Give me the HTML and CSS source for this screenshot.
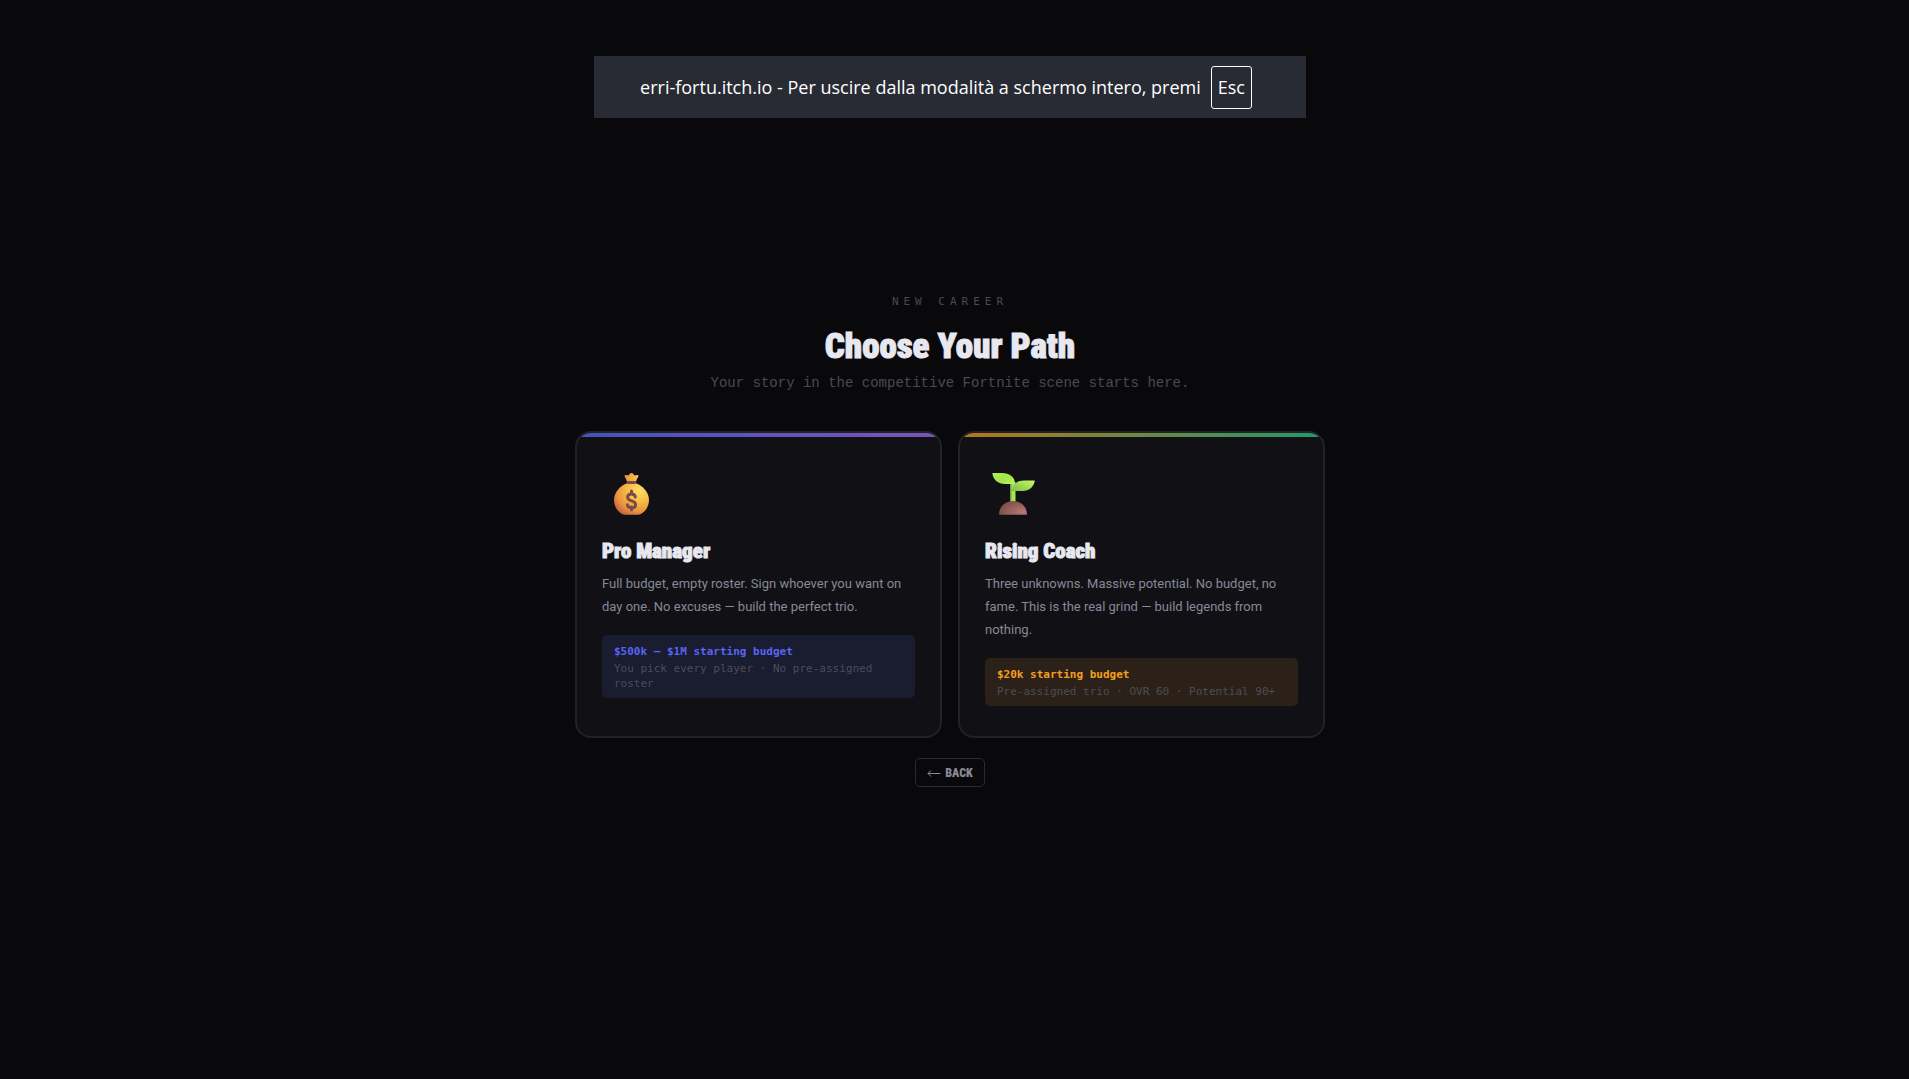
FILE: index.html
```html
<!doctype html>
<html lang="en">

<head>
    <meta charset="utf-8">
    <meta name="viewport" content="width=device-width, initial-scale=1">
    <title>New Career</title>
    <link rel="stylesheet" href="styles.css">
</head>

<body>
    <div class="fs-notice" lang="it">
        <span>erri-fortu.itch.io - Per uscire dalla modalità a schermo intero, premi</span>
        <kbd>Esc</kbd>
    </div>

    <main class="screen">
        <header class="intro">
            <p class="eyebrow">NEW CAREER</p>
            <h1>Choose Your Path</h1>
            <p class="tagline">Your story in the competitive Fortnite scene starts here.</p>
        </header>

        <div class="paths">
            <a class="card pro" href="#pro">
                <svg class="icon" viewBox="0 0 60 44" aria-hidden="true">
                    <defs>
                        <radialGradient id="gold" cx=".72" cy=".25" r=".85">
                            <stop offset="0" stop-color="#ffe067" />
                            <stop offset=".45" stop-color="#f6b840" />
                            <stop offset=".75" stop-color="#ea9440" />
                            <stop offset="1" stop-color="#c9653f" />
                        </radialGradient>
                        <linearGradient id="neck" x1="0" y1="0" x2="1" y2="0">
                            <stop offset="0" stop-color="#ef8f3c" />
                            <stop offset="1" stop-color="#fcc850" />
                        </linearGradient>
                    </defs>
                    <path fill="url(#neck)" d="M25 10 24.500 8l-1.800-3.400c-.4-.9.300-1.700 1.200-1.500l2.500.5 1.700-2c.8-.9 2-.9 2.800 0l1.700 2 2.500-.5c.9-.2 1.600.6 1.200 1.500L34.500 8 34 10z" />
                    <path fill="url(#gold)" d="M25.500 11h8C41 13.500 47 20.500 47 28c0 5.800-2.800 11-8 14a7 7 0 0 1-3 .7H23a7 7 0 0 1-3-.7c-5.200-3-8-8.200-8-14 0-7.500 6-14.500 13.500-17z" />
                    <rect x="25" y="9" width="9" height="3" rx="1" fill="#7d4a4b" />
                    <path fill="none" stroke="#7d4a4b" stroke-width="3" stroke-linecap="round" d="M29.500 19v3M29.500 35v3M33.300 25c-.4-2-1.800-3-3.800-3-2.300 0-3.900 1.300-3.900 3.200 0 4.700 8 2.600 8 7.200 0 2.100-1.700 3.400-4.100 3.400-2.300 0-3.800-1.200-4.100-3.100" />
                </svg>
                <h2>Pro Manager</h2>
                <p class="desc">Full budget, empty roster. Sign whoever you want on day one. No excuses — build the perfect trio.</p>
                <div class="perk">
                    <strong>$500k – $1M starting budget</strong>
                    <small>You pick every player · No pre-assigned roster</small>
                </div>
            </a>

            <a class="card coach" href="#coach">
                <svg class="icon" viewBox="0 0 60 44" aria-hidden="true">
                    <defs>
                        <linearGradient id="leafLeft" x1="0" y1="0" x2="1" y2="1">
                            <stop offset="0" stop-color="#b2f05d" />
                            <stop offset=".5" stop-color="#a4e34a" />
                            <stop offset="1" stop-color="#bdf55c" />
                        </linearGradient>
                        <linearGradient id="leafRight" x1="0" y1="1" x2="1" y2="0">
                            <stop offset="0" stop-color="#7dbd52" />
                            <stop offset=".5" stop-color="#a1dc4e" />
                            <stop offset="1" stop-color="#c9fa79" />
                        </linearGradient>
                        <radialGradient id="soil" cx=".85" cy=".8" r=".9">
                            <stop offset="0" stop-color="#b77975" />
                            <stop offset="1" stop-color="#7c4e48" />
                        </radialGradient>
                    </defs>
                    <path fill="#a9e653" d="M25.500 10h5v21h-5z" />
                    <path fill="#86c255" d="M25.500 12H27v19h-1.500z" />
                    <path fill="url(#leafLeft)" d="M8 1h9c8 0 13 4 13 11H20C13 12 8.500 8 7.400 1.800 7.300 1.300 7.500 1 8 1z" />
                    <path fill="url(#leafRight)" d="M27 19c0-6.500 5-10.500 12-10.500h10c.6 0 .9.500.7 1C48 15.500 44 19 38 19z" />
                    <path fill="url(#soil)" d="M14 42.700C14 35 20 29 28 29s14 6 14 13.700z" />
                </svg>
                <h2>Rising Coach</h2>
                <p class="desc">Three unknowns. Massive potential. No budget, no fame. This is the real grind — build legends from nothing.</p>
                <div class="perk">
                    <strong>$20k starting budget</strong>
                    <small>Pre-assigned trio · OVR 60 · Potential 90+</small>
                </div>
            </a>
        </div>

        <button class="back" type="button">
            <svg class="arrow" viewBox="0 0 14 8" aria-hidden="true">
                <path d="M13.500 4.500H1M4 1.500 1 4.500 4 7.500" />
            </svg>
            BACK
        </button>
    </main>
</body>

</html>
```
FILE: styles.css
```css
* {
    box-sizing: border-box;
}

body {
    margin: 0;
    background: #09090b;
    color: #e8e8f0;
    font-family: Roboto, sans-serif;
}

h1,
h2,
p {
    margin: 0;
}

h1,
h2,
.back {
    font-family: "Roboto Condensed", "Liberation Sans Narrow", "Liberation Sans", sans-serif;
    font-weight: 900;
}

h1,
h2 {
    -webkit-text-stroke: 1px currentColor;
}

/* fullscreen notice, lies over the game */
.fs-notice {
    position: absolute;
    top: 56px;
    left: 0;
    right: 9px;
    display: flex;
    align-items: center;
    gap: 10px;
    width: max-content;
    height: 62px;
    margin: 0 auto;
    padding: 0 54px 0 46px;
    background: #282b33;
    color: #fff;
    font-family: "Open Sans", sans-serif;
    font-size: 18px;
}

.fs-notice kbd {
    padding: 8px 6px;
    border: 1px solid #fff;
    border-radius: 3px;
    font: inherit;
    line-height: 25px;
}

.screen {
    display: flex;
    flex-direction: column;
    align-items: center;
    justify-content: center;
    min-height: 100vh;
    padding: 2px 9px 0 0;
}

.intro {
    margin-bottom: 38px;
    text-align: center;
}

.eyebrow,
.perk {
    font-family: "DejaVu Sans Mono", monospace;
}

.eyebrow {
    margin-bottom: 14px;
    color: #4a4a55;
    font-size: 11px;
    line-height: 16px;
    letter-spacing: 5px;
}

h1 {
    font-size: 35px;
    line-height: 46px;
}

.tagline {
    margin-top: 3px;
    color: #4a4a55;
    font-family: "Liberation Mono", monospace;
    font-size: 14px;
    line-height: 20px;
}

.paths {
    display: grid;
    grid-template-columns: 1fr 1fr;
    gap: 16px;
    width: 100%;
    max-width: 750px;
}

.card {
    position: relative;
    padding: 39px 25px 30px;
    overflow: hidden;
    border: 2px solid #222226;
    border-radius: 16px;
    background: #111115;
    color: inherit;
    text-decoration: none;
}

.card::before {
    content: "";
    position: absolute;
    top: 0;
    left: 0;
    right: 0;
    height: 4px;
}

.pro::before {
    background: linear-gradient(90deg, #4453bd, #7a55b8);
}

.coach::before {
    background: linear-gradient(90deg, #b4761c, #22996b);
}

.icon {
    display: block;
    width: 60px;
    height: 44px;
    margin-bottom: 21px;
}

h2 {
    margin-bottom: 7px;
    font-size: 21px;
    line-height: 28px;
}

.desc {
    margin-bottom: 17px;
    color: #888896;
    font-size: 13px;
    line-height: 23px;
}

.perk {
    padding: 9px 12px 7px;
    border-radius: 5px;
    font-size: 11px;
    line-height: 15px;
}

.perk strong,
.perk small {
    display: block;
}

.perk strong {
    margin-bottom: 2px;
}

.perk small {
    color: #4c4c57;
    font-size: inherit;
}

.pro .perk {
    background: #1a1c30;
}

.pro strong {
    color: #5865f2;
}

.coach .perk {
    background: #2c2118;
}

.coach strong {
    color: #f59e1b;
}

.back {
    display: flex;
    align-items: center;
    gap: 4px;
    height: 29px;
    margin-top: 20px;
    padding: 0 11px;
    border: 1px solid #2a2a30;
    border-radius: 5px;
    background: transparent;
    color: #888896;
    font-size: 12px;
}

.arrow {
    width: 14px;
    height: 8px;
    fill: none;
    stroke: currentColor;
}
```
